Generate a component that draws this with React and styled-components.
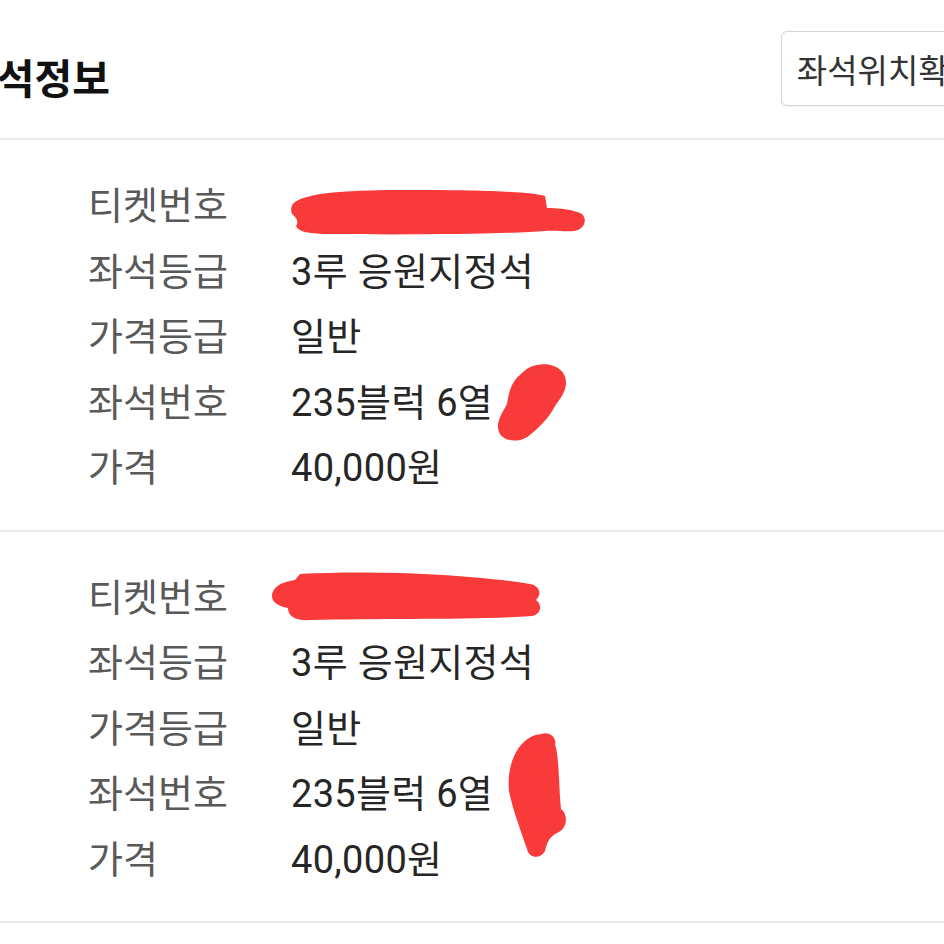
import React from 'react'
import styled, { createGlobalStyle } from 'styled-components'

const GlobalStyle = createGlobalStyle`
  html, body {
    margin: 0;
    padding: 0;
    background: #ffffff;
    overflow: hidden;
  }
  body {
    font-family: Roboto, 'Noto Sans CJK KR', 'Noto Sans', sans-serif;
  }
`

const tickets = [
  {
    id: 1,
    grade: '3루 응원지정석',
    priceGrade: '일반',
    seat: '235블럭 6열',
    price: '40,000원',
    marks: [
      {
        row: 0,
        left: -1,
        top: 5,
        w: 296,
        h: 52,
        d: 'M5 16 C20 6 60 4 120 4 C200 4 240 6 255 10 L257 22 C270 22 285 24 292 28 C298 34 294 44 284 45 C275 46 265 44 255 45 C220 48 120 49 40 48 C20 48 8 46 6 40 C10 34 4 30 2 28 C0 22 2 18 5 16 Z',
      },
      {
        row: 3,
        left: 204,
        top: -10,
        w: 74,
        h: 82,
        d: 'M42 3 C58 0 72 8 71 22 C70 32 64 38 60 44 C55 54 46 64 36 72 C26 82 8 80 4 70 C0 60 8 50 12 42 C14 30 16 20 26 12 C32 6 36 4 42 3 Z',
      },
    ],
  },
  {
    id: 2,
    grade: '3루 응원지정석',
    priceGrade: '일반',
    seat: '235블럭 6열',
    price: '40,000원',
    marks: [
      {
        row: 0,
        left: -21,
        top: -4,
        w: 274,
        h: 56,
        d: 'M30 6 C100 2 200 6 260 16 C270 18 272 26 266 32 C272 36 272 46 262 48 C200 52 110 50 40 52 C25 53 18 48 18 40 C8 38 2 34 2 28 C2 20 10 14 25 12 Z',
      },
      {
        row: 3,
        left: 214,
        top: -32,
        w: 66,
        h: 130,
        d: 'M36 3 C46 0 52 8 50 14 C54 22 54 60 56 78 C64 84 62 98 52 102 C44 106 42 112 40 120 C36 128 24 128 22 118 C16 100 8 80 4 60 C2 40 8 20 20 10 C26 5 30 4 36 3 Z',
      },
    ],
  },
]

const Page = styled.div`
  width: 100%;
  background: #fff;
`

const Header = styled.header`
  display: flex;
  justify-content: space-between;
  align-items: flex-start;
  height: 138px;
  border-bottom: 2px solid #e9e9e9;
`

const Title = styled.h2`
  margin: 0 0 0 -41px;
  padding-top: 58px;
  font-size: 41px;
  line-height: 44px;
  font-weight: 700;
  color: #111;
`

const LocationButton = styled.button`
  flex-shrink: 0;
  margin: 31px -51px 0 0;
  height: 75px;
  padding: 0 15px;
  background: #fff;
  border: 1.5px solid #d4d4d4;
  border-radius: 6px;
  font-family: inherit;
  font-size: 33px;
  color: #333;
  white-space: nowrap;
  box-shadow: 0 1px 2px rgba(0, 0, 0, 0.06);
`

const Block = styled.section`
  padding: 30px 0 32px 88px;
  border-bottom: 2px solid #e9e9e9;
`

const Row = styled.div`
  display: grid;
  grid-template-columns: 203px 1fr;
  height: 65.5px;
  align-items: center;
  font-size: 38px;
`

const Label = styled.span`
  color: #595959;
`

const Value = styled.span`
  position: relative;
  color: #262626;
  min-height: 44px;
  letter-spacing: 0.3px;
`

const Mark = styled.svg`
  position: absolute;
  pointer-events: none;
`

const Scribble = ({ m }) => (
  <Mark
    width={m.w}
    height={m.h}
    viewBox={`0 0 ${m.w} ${m.h}`}
    style={{ left: m.left, top: m.top }}
  >
    <path d={m.d} fill='#f93a3a' />
  </Mark>
)

const TicketBlock = ({ ticket }) => {
  const rows = [
    ['티켓번호', ''],
    ['좌석등급', ticket.grade],
    ['가격등급', ticket.priceGrade],
    ['좌석번호', ticket.seat],
    ['가격', ticket.price],
  ]

  return (
    <Block>
      {rows.map(([label, value], i) => (
        <Row key={label}>
          <Label>{label}</Label>
          <Value>
            {value}
            {ticket.marks
              .filter((m) => m.row === i)
              .map((m, k) => (
                <Scribble key={k} m={m} />
              ))}
          </Value>
        </Row>
      ))}
    </Block>
  )
}

const App = () => {
  return (
    <Page>
      <GlobalStyle />
      <Header>
        <Title>좌석정보</Title>
        <LocationButton>좌석위치확인</LocationButton>
      </Header>
      {tickets.map((t) => (
        <TicketBlock key={t.id} ticket={t} />
      ))}
    </Page>
  )
}

export default App
